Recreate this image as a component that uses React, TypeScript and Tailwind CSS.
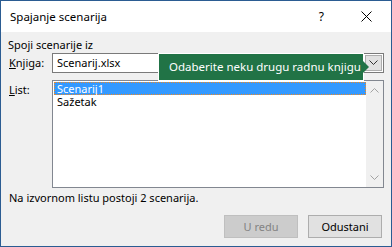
import React from "react";

function Chevron({ dir, color }: { dir: "up" | "down"; color: string }) {
  return (
    <svg width="9" height="6" viewBox="0 0 9 6">
      {dir === "down" ? (
        <path d="M0.5 0.5 L4.5 4.5 L8.5 0.5" fill="none" stroke={color} strokeWidth="1" />
      ) : (
        <path d="M0.5 5.5 L4.5 1.5 L8.5 5.5" fill="none" stroke={color} strokeWidth="1" />
      )}
    </svg>
  );
}

export default function App() {
  return (
    <div className="relative w-[392px] h-[247px] border border-[#2b5c92] bg-[#f0f0f0] flex flex-col text-[11px] leading-[16px] text-black overflow-hidden font-['Noto_Sans',sans-serif]">
      {/* Title bar */}
      <div className="h-[31px] bg-white flex items-center pl-[9px] shrink-0">
        <span className="text-[11.5px]">Spajanje scenarija</span>
        <span className="ml-auto mr-[37px] text-[12px]">?</span>
        <svg width="11" height="11" viewBox="0 0 11 11" className="mr-[19px]">
          <path d="M0.5 0.5 L10.5 10.5 M10.5 0.5 L0.5 10.5" stroke="#000" strokeWidth="1" />
        </svg>
      </div>

      {/* Body */}
      <div className="flex flex-col px-[7px] pt-[5px]">
        <div className="h-[16px]">Spoji scenarije iz</div>

        <div className="flex items-center h-[20px]">
          <div className="w-[44px] pl-[1px]">
            <span className="underline">K</span>njiga:
          </div>
          <div className="flex-1 h-[20px] bg-white border border-[#7a7a7a] flex items-center">
            <span className="pl-[4px]">Scenarij.xlsx</span>
            <div className="ml-auto mr-[1px] w-[17px] h-[16px] bg-[#e1e1e1] border border-[#adadad] flex items-center justify-center">
              <Chevron dir="down" color="#333" />
            </div>
          </div>
        </div>

        <div className="flex mt-[7px]">
          <div className="w-[44px] pl-[1px] pt-[2px]">
            <span className="underline">L</span>ist:
          </div>
          <div className="flex-1 h-[108px] bg-white border border-[#828790] flex">
            <div className="flex-1 flex flex-col pt-[1px] pl-[1px]">
              <div className="h-[13px] leading-[13px] bg-[#3399ff] text-white pl-[3px] outline outline-1 outline-dotted outline-[#f08a24] -outline-offset-1">
                Scenarij1
              </div>
              <div className="h-[13px] leading-[13px] pl-[3px]">Sažetak</div>
            </div>
            <div className="w-[17px] bg-[#f0f0f0] flex flex-col items-center justify-between py-[6px]">
              <Chevron dir="up" color="#a3a3a3" />
              <Chevron dir="down" color="#a3a3a3" />
            </div>
          </div>
        </div>

        <div className="mt-[2px] h-[16px] pl-[1px]">Na izvornom listu postoji 2 scenarija.</div>

        <div className="flex justify-end gap-[10px] mt-[9px] pr-[2px]">
          <div className="w-[74px] h-[23px] bg-[#cccccc] border border-[#bfbfbf] text-[#838383] flex items-center justify-center">
            U redu
          </div>
          <div className="w-[74px] h-[23px] bg-[#e1e1e1] border border-[#adadad] flex items-center justify-center">
            Odustani
          </div>
        </div>
      </div>

      {/* Tooltip */}
      <div className="absolute left-[157px] top-[52px] flex items-center">
        <div className="h-[28px] w-[206px] bg-[#217346] border border-white text-white text-[11.5px] whitespace-nowrap flex items-center pl-[10px]">
          Odaberite neku drugu radnu knjigu
        </div>
        <div className="w-0 h-0 border-y-[6px] border-y-transparent border-l-[6px] border-l-[#217346] -ml-[1px]" />
      </div>
    </div>
  );
}
